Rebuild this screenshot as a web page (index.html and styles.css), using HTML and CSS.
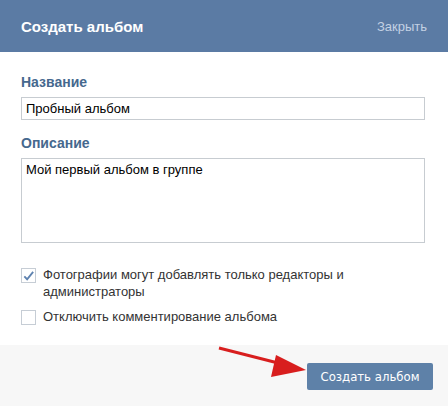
FILE: index.html
```html
<!DOCTYPE html>
<html>
<head>
    <meta charset="UTF-8">
    <title>Создать альбом</title>
    <link rel="stylesheet" href="styles.css">
</head>
<body>
    <div class="dialog">
        <div class="dialog-header">
            <h2>Создать альбом</h2>
            <span class="close">Закрыть</span>
        </div>

        <div class="dialog-body">
            <div class="field">
                <label class="field-label">Название</label>
                <input class="text-input" type="text" value="Пробный альбом">
            </div>
            <div class="field">
                <label class="field-label">Описание</label>
                <textarea class="text-area">Мой первый альбом в группе</textarea>
            </div>

            <div class="options">
                <div class="option">
                    <span class="checkbox checked">
                        <svg width="14" height="14" viewBox="0 0 14 14">
                            <path d="M2.5 7.5 L5.5 10.5 L12 2.5" fill="none" stroke="#5f83b0" stroke-width="2"/>
                        </svg>
                    </span>
                    <span class="option-text">Фотографии могут добавлять только редакторы и администраторы</span>
                </div>
                <div class="option">
                    <span class="checkbox"></span>
                    <span class="option-text">Отключить комментирование альбома</span>
                </div>
            </div>
        </div>

        <div class="dialog-footer">
            <button class="btn">Создать альбом</button>
        </div>

        <!-- стрелка поверх формы -->
        <svg class="arrow" width="448" height="406" viewBox="0 0 448 406">
            <line x1="219" y1="348" x2="282" y2="364" stroke="#d81e1e" stroke-width="3"/>
            <polygon points="306,370 276,355 271,377" fill="#d81e1e"/>
        </svg>
    </div>
</body>
</html>
```

FILE: styles.css
```css
* {
    margin: 0;
    padding: 0;
    box-sizing: border-box;
}

body {
    font-family: "Liberation Sans", Arial, sans-serif;
    background-color: #fff;
    color: #222;
}

.dialog {
    position: relative;
    width: 448px;
    height: 406px;
    display: flex;
    flex-direction: column;
}

.dialog-header {
    height: 52px;
    background-color: #5b7ba4;
    display: flex;
    align-items: center;
    justify-content: space-between;
    padding: 0 21px;
}

.dialog-header h2 {
    font-size: 15px;
    font-weight: bold;
    color: #fff;
}

.close {
    font-size: 13px;
    color: #c3d1e3;
}

.dialog-body {
    flex: 1;
    padding: 22px 23px 0 21px;
}

.field {
    margin-bottom: 15px;
}

.field-label {
    display: block;
    font-size: 14px;
    font-weight: bold;
    color: #45688e;
    line-height: 17px;
    margin-bottom: 6px;
}

.text-input,
.text-area {
    display: block;
    width: 100%;
    border: 1px solid #c7ccd1;
    font-family: "Liberation Sans", Arial, sans-serif;
    font-size: 13px;
    color: #000;
    padding: 3px 4px;
    outline: none;
}

.text-input {
    height: 23px;
}

.text-area {
    height: 85px;
    resize: none;
}

.options {
    padding-top: 8px;
}

.option {
    display: flex;
    align-items: flex-start;
    margin-bottom: 8px;
}

.checkbox {
    width: 15px;
    height: 15px;
    border: 1px solid #c6cdd5;
    background-color: #fff;
    margin-top: 2px;
    margin-right: 7px;
    flex-shrink: 0;
    display: flex;
    align-items: center;
    justify-content: center;
}

.checkbox svg {
    display: block;
}

.option-text {
    font-size: 13px;
    line-height: 17px;
    color: #333;
    max-width: 340px;
}

.dialog-footer {
    height: 61px;
    background-color: #f7f7f7;
    display: flex;
    justify-content: flex-end;
    padding: 18px 15px 0 0;
}

.btn {
    width: 126px;
    height: 27px;
    background-color: #5e81a8;
    color: #fff;
    border: none;
    border-radius: 2px;
    font-family: "DejaVu Sans Condensed", "Liberation Sans", sans-serif;
    font-size: 13px;
}

.arrow {
    position: absolute;
    left: 0;
    top: 0;
    pointer-events: none;
}
```
